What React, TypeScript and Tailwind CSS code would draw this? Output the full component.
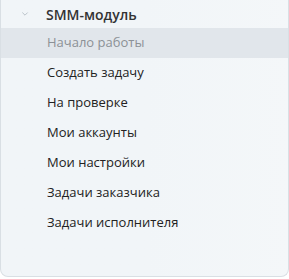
import React from 'react';

const ITEMS = [
  'Начало работы',
  'Создать задачу',
  'На проверке',
  'Мои аккаунты',
  'Мои настройки',
  'Задачи заказчика',
  'Задачи исполнителя',
];

export default function App() {
  return (
    <div className="h-[279px] w-[289px] bg-white" style={{ fontFamily: '"Open Sans", "Noto Sans", sans-serif' }}>
      <div className="flex h-[277px] flex-col rounded-b-[8px] border-b border-l border-r border-[#d9dfe4] bg-gradient-to-r from-[#f1f5f8] via-[#f1f5f8] to-[#f4f7f9]">
        <div className="flex h-[28px] items-center">
          <svg className="ml-[20px] h-[8px] w-[8px] text-[#b8c0c8]" viewBox="0 0 10 10" fill="none" stroke="currentColor">
            <path d="M2 3.5l3 3 3-3" strokeWidth={1.2} strokeLinecap="round" strokeLinejoin="round" />
          </svg>
          <span className="ml-[17px] text-[14px] font-semibold text-[#333]">SMM-модуль</span>
        </div>
        <ul>
          {ITEMS.map((item, i) => (
            <li
              key={item}
              className={
                i === 0
                  ? 'flex h-[30px] items-center bg-[#e1e6eb] pl-[46px] text-[13px] text-[#8c9196]'
                  : 'flex h-[30px] items-center pl-[46px] text-[13px] text-[#222]'
              }
            >
              {item}
            </li>
          ))}
        </ul>
      </div>
    </div>
  );
}
